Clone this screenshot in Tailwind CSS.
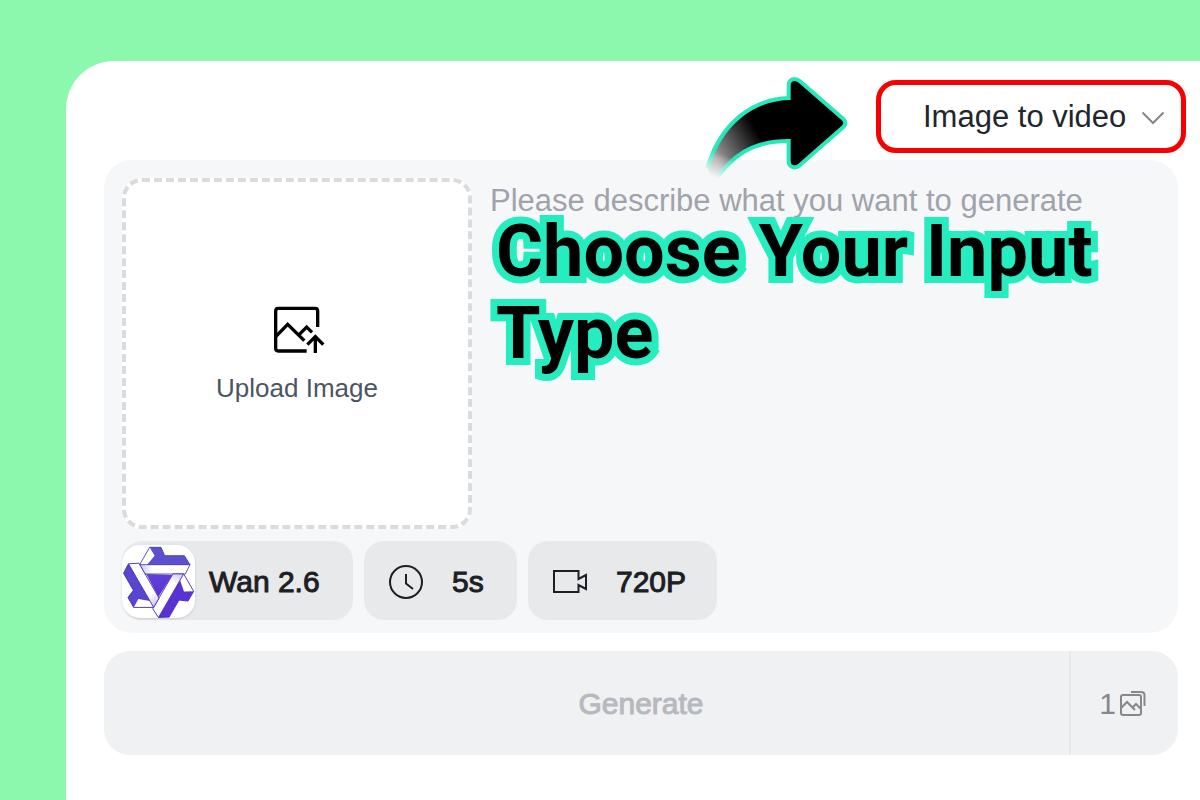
<!DOCTYPE html>
<html lang="en">
<head>
  <meta charset="UTF-8" />
  <meta name="viewport" content="width=device-width, initial-scale=1.0" />
  <title>Image to video</title>
  <script src="https://cdn.jsdelivr.net/npm/@tailwindcss/browser@4"></script>
</head>
<body class="flex min-h-screen bg-[#8cf8ad] pt-[61px] pl-[66px] font-['Liberation_Sans',Arial,sans-serif]">
  <main class="flex-1 rounded-tl-[48px] bg-white pt-[19px] pr-[22px] pb-11 pl-[38px]">

    <!-- Mode select -->
    <div class="-mr-2 flex justify-end">
      <div class="relative w-[310px]">
        <select aria-label="Input type" class="block h-[73px] w-full appearance-none rounded-[20px] border-5 border-[#f90000] bg-white pt-0.5 pl-[42px] text-[31px] text-[#22262a]">
          <option>Image to video</option>
          <option>Text to video</option>
        </select>
        <svg class="pointer-events-none absolute top-[30px] right-[21px] h-4 w-6" viewBox="0 0 24 16" fill="none" stroke="#85858d" stroke-width="2">
          <path d="M1.500 2.500 L12 13 L22.500 2.500" />
        </svg>
        <!-- Arrow pointing at the select -->
        <svg class="pointer-events-none absolute -top-2 right-[337px] h-[114px] w-[147px]" viewBox="39 36 441 342">
          <defs>
            <linearGradient id="body" gradientUnits="userSpaceOnUse" x1="80" y1="300" x2="212" y2="225">
              <stop offset="0" stop-color="#a0a0a0" />
              <stop offset="0.550" stop-color="#484848" />
              <stop offset="1" stop-color="#000" />
            </linearGradient>
            <linearGradient id="fade" gradientUnits="userSpaceOnUse" x1="62" y1="346" x2="94" y2="278">
              <stop offset="0" stop-color="#000" />
              <stop offset="1" stop-color="#fff" />
            </linearGradient>
            <mask id="tail" maskUnits="userSpaceOnUse" x="30" y="30" width="460" height="360">
              <rect x="30" y="30" width="460" height="360" fill="url(#fade)" />
            </mask>
          </defs>
          <path mask="url(#tail)" fill="url(#body)" stroke="#25e8bb" stroke-width="12" d="M72 374 C124 285 192 243 299 243 V303 C299 321 317 328 332 316 L463 201 Q475 189 463 177 L333 64 C318 51 299 57 299 77 V114 C194 118 96 185 55 324" />
        </svg>
      </div>
    </div>

    <!-- Prompt panel -->
    <section class="mt-[7px] rounded-[28px] bg-[#f6f7f9] px-[18px] pt-[18px] pb-[13px]">
      <div class="flex gap-[18px]">
        <button class="flex h-[351px] w-[350px] shrink-0 flex-col items-center justify-center rounded-[20px] border-4 border-dashed border-[#dadbdd] bg-white pt-0.5 text-[26px] leading-8 text-[#4b5563]">
          <svg class="mb-[18px] ml-1 h-12 w-[52px]" viewBox="219 45 156 144" fill="none" stroke="#000" stroke-width="10">
            <path d="M353 108 V60 Q353 52 345 52 H235 Q227 52 227 60 V172 Q227 180 235 180 H320" />
            <path d="M228 136 L263 100 L313 149" />
            <path d="M298 130 L320 108 L336 124" />
            <path d="M346 186 V138 M322 161 L346 137 L370 161" />
          </svg>
          Upload Image
        </button>
        <div class="relative flex-1">
          <textarea aria-label="Prompt" placeholder="Please describe what you want to generate" class="block h-full w-full resize-none bg-transparent pt-px text-[31px] leading-11 text-[#22262a] outline-none placeholder:text-[#a0a3ab]"></textarea>
          <h1 class="pointer-events-none absolute top-[33px] left-1.5 w-[650px] font-[Roboto,sans-serif] text-[72px] leading-[82px] font-bold text-black [-webkit-text-stroke:14px_#25edbf] [paint-order:stroke_fill]">Choose Your Input Type</h1>
        </div>
      </div>

      <div class="mt-3 flex gap-[11px] text-[30px] text-[#1c2024] [-webkit-text-stroke:1px_#1c2024]">
        <button class="flex h-[79px] w-[231px] items-center rounded-[20px] bg-[#e8e9eb] pt-0.5">
          <span class="mr-3.5 flex size-[73px] items-center justify-center rounded-[18px] bg-white shadow-sm">
            <svg class="size-[72px]" viewBox="-108 -108 216 216" stroke="#4432b4" stroke-width="2.500" stroke-linejoin="round">
              <defs>
                <linearGradient id="violet" gradientUnits="userSpaceOnUse" x1="-20" y1="-100" x2="20" y2="105">
                  <stop offset="0" stop-color="#5f55cf" />
                  <stop offset="1" stop-color="#5a20d8" />
                </linearGradient>
                <linearGradient id="fold" gradientUnits="userSpaceOnUse" x1="-54" y1="-38" x2="-18" y2="-38">
                  <stop offset="0" stop-color="#cfc8f5" />
                  <stop offset="1" stop-color="#fff" />
                </linearGradient>
              </defs>
              <path fill="url(#violet)" stroke="none" d="M-38 -24 L40 -21 L-2 45 Z" />
              <g>
                <path fill="#5a50d0" d="M-28 -104 H6 L17 -79 H76 L93 -52 H-37 L-14 -79 Z" />
                <path fill="#fff" stroke="none" d="M-28 -104 L-13 -79 L-36 -52 L-38 -26 L-58 -52 Z" />
                <path fill="url(#fold)" d="M-58 -52 H93 L79 -24 H-42 Z" />
                <path fill="none" d="M-28 -104 L-58 -52" />
              </g>
              <g transform="rotate(120)">
                <path fill="#5932d6" d="M-28 -104 H6 L17 -79 H76 L93 -52 H-37 L-14 -79 Z" />
                <path fill="#fff" stroke="none" d="M-28 -104 L-13 -79 L-36 -52 L-38 -26 L-58 -52 Z" />
                <path fill="url(#fold)" d="M-58 -52 H93 L79 -24 H-42 Z" />
                <path fill="none" d="M-28 -104 L-58 -52" />
              </g>
              <g transform="rotate(240)">
                <path fill="#5846d0" d="M-28 -104 H6 L17 -79 H76 L93 -52 H-37 L-14 -79 Z" />
                <path fill="#fff" stroke="none" d="M-28 -104 L-13 -79 L-36 -52 L-38 -26 L-58 -52 Z" />
                <path fill="url(#fold)" d="M-58 -52 H93 L79 -24 H-42 Z" />
                <path fill="none" d="M-28 -104 L-58 -52" />
              </g>
            </svg>
          </span>
          Wan 2.6
        </button>
        <button class="flex h-[79px] w-[153px] items-center gap-7 rounded-[20px] bg-[#e8e9eb] pt-0.5 pl-6">
          <svg class="size-9" viewBox="0 0 36 36" fill="none" stroke="#1c2024" stroke-width="2">
            <circle cx="18" cy="18" r="16" />
            <path d="M18 10 V19.500 L25 25" />
          </svg>
          5s
        </button>
        <button class="flex h-[79px] w-[189px] items-center gap-7 rounded-[20px] bg-[#e8e9eb] pt-0.5 pl-6">
          <svg class="size-9" viewBox="0 0 36 36" fill="none" stroke="#1c2024" stroke-width="2">
            <path d="M2 7 H26.500 V15 L34 11 V25 L26.500 21 V28 H2 Z" />
          </svg>
          720P
        </button>
      </div>
    </section>

    <!-- Submit bar -->
    <div class="mt-[18px] flex h-[104px] overflow-hidden rounded-[26px] bg-[#f0f1f3]">
      <button disabled class="flex-1 pl-[109px] text-[30px] text-[#b6b9be] [-webkit-text-stroke:1px_#b6b9be]">Generate</button>
      <button class="flex w-[109px] items-center justify-center gap-[3px] border-l-2 border-[#e6e7ea] pr-1 text-[30px] text-[#88888a]">
        1
        <svg class="size-[27px]" viewBox="0 0 27 27" fill="none" stroke="#88888a" stroke-width="2">
          <rect x="2" y="5" width="20" height="20" rx="2" />
          <path d="M2 18 L8 12 L16 20 M14 17 L17 14 L22 19" />
          <path d="M12 2 H22 Q25.500 2 25.500 5 V16" />
        </svg>
      </button>
    </div>
  </main>
</body>
</html>
